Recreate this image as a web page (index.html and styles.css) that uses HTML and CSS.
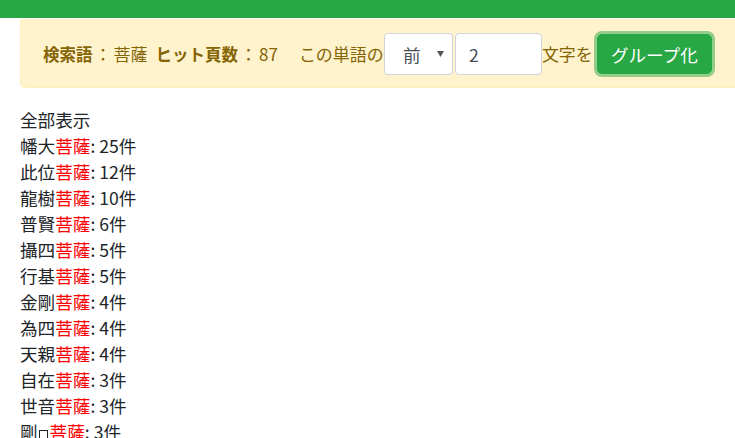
FILE: index.html
```html
<!DOCTYPE html>
<html lang="ja">
<head>
    <meta charset="UTF-8">
    <meta name="viewport" content="width=device-width, initial-scale=1.0">
    <title>検索結果</title>
    <link rel="stylesheet" href="styles.css">
</head>
<body>
    <div class="topbar"></div>

    <div class="page">
        <div class="alert">
            <b>検索語</b><span class="colon">：</span>菩薩
            <b class="hits">ヒット頁数</b><span class="colon">：</span>87
            <span class="label">この単語の</span>
            <select class="form-control select">
                <option>前</option>
                <option>後</option>
            </select>
            <input class="form-control number" type="text" value="2">
            <span>文字を</span>
            <button class="btn">グループ化</button>
        </div>

        <ul class="groups">
            <li>全部表示</li>
            <li>幡大<span class="hl">菩薩</span>: 25件</li>
            <li>此位<span class="hl">菩薩</span>: 12件</li>
            <li>龍樹<span class="hl">菩薩</span>: 10件</li>
            <li>普賢<span class="hl">菩薩</span>: 6件</li>
            <li>攝四<span class="hl">菩薩</span>: 5件</li>
            <li>行基<span class="hl">菩薩</span>: 5件</li>
            <li>金剛<span class="hl">菩薩</span>: 4件</li>
            <li>為四<span class="hl">菩薩</span>: 4件</li>
            <li>天親<span class="hl">菩薩</span>: 4件</li>
            <li>自在<span class="hl">菩薩</span>: 3件</li>
            <li>世音<span class="hl">菩薩</span>: 3件</li>
            <li>剛<span class="tofu"></span><span class="hl">菩薩</span>: 3件</li>
        </ul>
    </div>
</body>
</html>
```

FILE: styles.css
```css
:root {
    --green: #28a745;
    --warn-bg: #fff3cd;
    --warn-border: #ffeeba;
    --warn-text: #856404;
    --text: #212529;
    --input-border: #ced4da;
}

html {
    overflow-x: hidden;
}

body {
    margin: 0;
    font-family: "Noto Sans CJK JP", "Noto Sans", sans-serif;
    font-size: 17.6px;
    color: var(--text);
    background: #fff;
}

.topbar {
    height: 18px;
    background: var(--green);
}

.page {
    padding: 0 0 0 20px;
}

.alert {
    display: flex;
    align-items: center;
    white-space: nowrap;
    margin: 1px -60px 0 0;
    padding: 14px 20px 12px 22px;
    background: var(--warn-bg);
    border: 1px solid var(--warn-border);
    border-top: none;
    border-radius: 0 0 5px 5px;
    color: var(--warn-text);
    font-size: 17px;
    line-height: 24px;
}

.alert b {
    font-weight: 700;
    font-size: 16.5px;
}

.colon {
    margin: 0 2px;
}

.hits {
    margin-left: 8px;
}

.label {
    margin-left: 21px;
}

.form-control {
    box-sizing: border-box;
    height: 42px;
    font-family: inherit;
    font-size: 17.6px;
    color: #495057;
    background: #fff;
    border: 1px solid var(--input-border);
    border-radius: 4px;
}

.select {
    width: 69px;
    padding: 0 0 0 18px;
    appearance: none;
    -webkit-appearance: none;
    background-image: url("data:image/svg+xml;utf8,<svg xmlns='http://www.w3.org/2000/svg' width='7' height='6'><path d='M0 0h7L3.5 6z' fill='%23555'/></svg>");
    background-repeat: no-repeat;
    background-position: right 8px center;
}

.number {
    width: 87px;
    margin-left: 2px;
    padding: 0 13px;
}

.btn {
    margin-left: 4px;
    height: 40px;
    padding: 0 13px;
    font-family: inherit;
    font-size: 17.6px;
    color: #fff;
    background: var(--green);
    border: 1px solid var(--green);
    border-radius: 5px;
    box-shadow: 0 0 0 3px rgba(40, 167, 69, 0.5);
}

.groups {
    list-style: none;
    margin: 19px 0 0;
    padding: 0;
    line-height: 26px;
}

.hl {
    color: #ff0000;
}

.tofu {
    display: inline-block;
    width: 7px;
    height: 8px;
    margin: 0 2px 0 1px;
    border: 1px solid var(--text);
    border-bottom: none;
}
```
